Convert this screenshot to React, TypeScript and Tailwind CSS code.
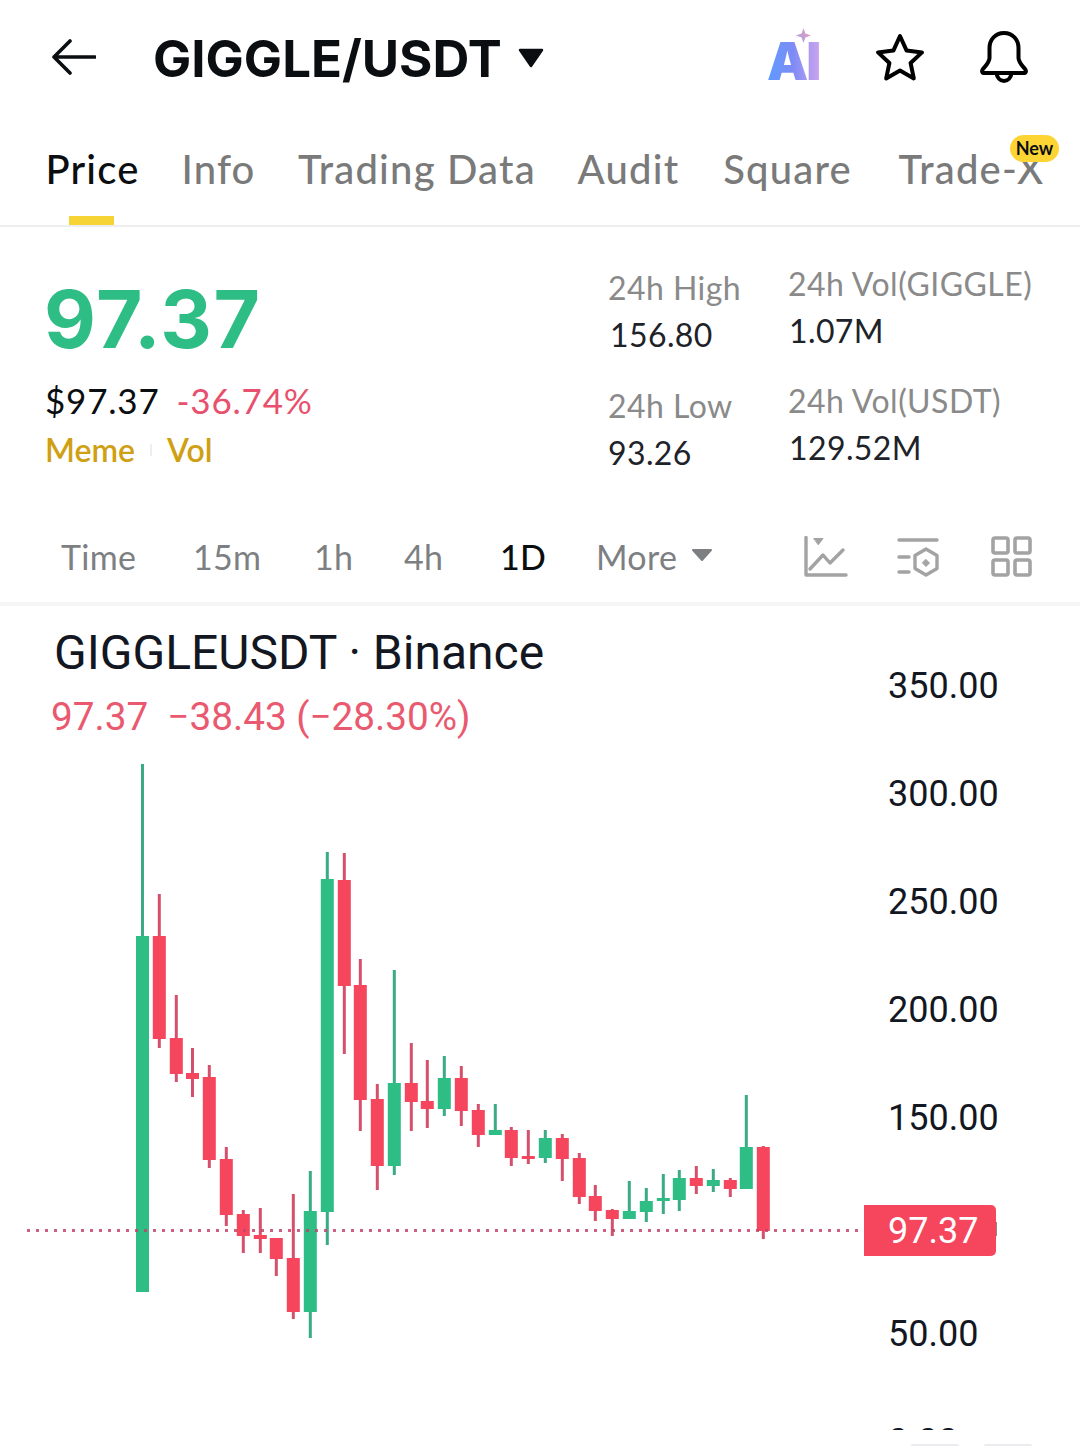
import React from "react";

const G = "#2ebd85";
const R = "#f6465d";
const GW = "#3aab86";
const RW = "#d4506c";

// cx, wickTop, bodyTop, bodyBottom, wickBottom, up
const candles: [number, number, number, number, number, number][] = [
  [142.5, 764, 936, 1292, 1292, 1],
  [159.3, 894, 936, 1039, 1048, 0],
  [176.3, 995, 1038, 1074, 1082, 0],
  [192.5, 1048, 1073, 1079, 1097, 0],
  [209.3, 1065, 1077, 1160, 1168, 0],
  [226.3, 1147, 1159, 1215, 1226, 0],
  [243.3, 1210, 1214, 1236, 1253, 0],
  [260.3, 1208, 1235, 1239, 1253, 0],
  [276.3, 1238, 1238, 1259, 1276, 0],
  [293.3, 1194, 1258, 1312, 1319, 0],
  [310.3, 1171, 1211, 1312, 1338, 1],
  [327.3, 852, 879, 1212, 1245, 1],
  [344.3, 853, 880, 986, 1054, 0],
  [360.3, 959, 985, 1100, 1131, 0],
  [377.3, 1084, 1099, 1166, 1190, 0],
  [394.3, 970, 1083, 1166, 1175, 1],
  [411.3, 1043, 1083, 1102, 1131, 0],
  [427.3, 1060, 1101, 1109, 1128, 0],
  [444.3, 1056, 1078, 1109, 1116, 1],
  [461.3, 1066, 1078, 1111, 1126, 0],
  [478.3, 1104, 1110, 1135, 1147, 0],
  [495.3, 1104, 1130, 1135, 1135, 1],
  [511.3, 1127, 1130, 1158, 1166, 0],
  [528.3, 1130, 1156, 1159, 1164, 0],
  [545.3, 1130, 1138, 1158, 1163, 1],
  [562.3, 1134, 1138, 1159, 1181, 0],
  [579.3, 1153, 1158, 1197, 1204, 0],
  [595.3, 1185, 1196, 1211, 1221, 0],
  [612.3, 1209, 1210, 1219, 1236, 0],
  [629.3, 1181, 1211, 1219, 1219, 1],
  [646.3, 1188, 1201, 1212, 1222, 1],
  [663.3, 1174, 1198, 1201, 1214, 1],
  [679.3, 1170, 1178, 1200, 1211, 1],
  [696.3, 1166, 1178, 1186, 1194, 0],
  [713.3, 1169, 1180, 1186, 1192, 1],
  [730.3, 1178, 1180, 1189, 1197, 0],
  [746.3, 1095, 1147, 1189, 1189, 1],
  [763.3, 1146, 1147, 1231, 1239, 0],
];

function Chart() {
  return (
    <svg width="864" height="824" viewBox="0 606 864 824" className="block shrink-0">
      {candles.map(([x, wt, bt, bb, wb, up]) => (
        <g key={x}>
          <rect x={x - 1.5} y={wt} width="3" height={wb - wt} fill={up ? GW : RW} />
          <rect x={x - 6.5} y={bt} width="13" height={bb - bt} fill={up ? G : R} />
        </g>
      ))}
      <line x1="27" x2="860" y1="1230.5" y2="1230.5" stroke="#c2456a" strokeWidth="3" strokeDasharray="3 6" opacity="0.85" />
    </svg>
  );
}

function AiLogo() {
  return (
    <div className="relative w-[55px] h-[52px] mt-[4px]">
      <svg width="17" height="17" viewBox="0 0 18 18" className="absolute left-[28px] top-[-6px]">
        <defs>
          <linearGradient id="sp" x1="0" y1="1" x2="1" y2="0">
            <stop offset="0" stopColor="#9f9cf5" />
            <stop offset="1" stopColor="#f0a0a8" />
          </linearGradient>
        </defs>
        <path d="M9 1 L11 7 L17 9 L11 11 L9 17 L7 11 L1 9 L7 7 Z" fill="url(#sp)" />
      </svg>
      <span
        className="absolute left-0 top-[1px] text-[52px] leading-[56px] font-black tracking-[-2px] bg-gradient-to-r from-[#5b9bff] via-[#7d8bf5] to-[#c9a3f0] bg-clip-text text-transparent"
        style={{ fontFamily: "Inter, sans-serif" }}
      >
        AI
      </span>
    </div>
  );
}

function Tab({ label, active, width }: { label: string; active?: boolean; width: string }) {
  return (
    <div className={`flex flex-col items-center shrink-0 ${width}`}>
      <span className={`text-[40px] leading-[46px] tracking-[1.2px] whitespace-nowrap font-medium ${active ? "text-[#0b0e11]" : "text-[#7a7a7a]"}`}>{label}</span>
      <div className={`w-[45px] h-[9px] mt-[24px] mr-[2px] ${active ? "bg-[#f6d436]" : "bg-transparent"}`} />
    </div>
  );
}

function Stat({ label, value, vClass, lClass }: { label: string; value: string; vClass?: string; lClass?: string }) {
  return (
    <div className="flex flex-col">
      <span className={`text-[32px] leading-[40px] tracking-[0.45px] text-[#8a8a8a] whitespace-nowrap ${lClass ?? ""}`}>{label}</span>
      <span className={`text-[32px] leading-[40px] tracking-[0.4px] mt-[7px] text-[#1e2329] whitespace-nowrap ${vClass ?? ""}`}>{value}</span>
    </div>
  );
}

export default function App() {
  const labels = ["350.00", "300.00", "250.00", "200.00", "150.00", "", "50.00", "0.00"];
  return (
    <div className="w-[1080px] h-[1446px] bg-white overflow-hidden flex flex-col" style={{ fontFamily: "Lato, sans-serif" }}>
      {/* Header */}
      <div className="h-[114px] shrink-0 flex items-center pl-[52px] pr-[50px]">
        <svg width="44" height="36" viewBox="0 0 44 36" fill="none" stroke="#0b0e11" strokeWidth="3.6" strokeLinecap="round" strokeLinejoin="round">
          <path d="M43 18H2M18 2 2 18l16 16" />
        </svg>
        <span className="ml-[57px] mt-[3px] text-[51px] leading-[60px] font-bold tracking-[0px] text-[#0b0e11]" style={{ fontFamily: "Inter, sans-serif" }}>
          GIGGLE/USDT
        </span>
        <svg width="28" height="20" viewBox="0 0 28 20" className="ml-[15px] mt-[2px]">
          <path d="M3 2h22l-11 16z" fill="#0b0e11" stroke="#0b0e11" strokeWidth="2.5" strokeLinejoin="round" />
        </svg>
        <div className="ml-auto flex items-center gap-[52px]">
          <AiLogo />
          <svg width="52" height="50" viewBox="0 0 52 50" fill="none" stroke="#000" strokeWidth="4" strokeLinejoin="round">
            <path d="M26 4l6.6 14.6L48 20.4 36.6 31l3.2 15.4L26 38.6 12.2 46.4 15.4 31 4 20.4l15.4-1.8z" />
          </svg>
          <svg width="52" height="54" viewBox="0 0 52 54" fill="none" stroke="#000" strokeWidth="4" strokeLinejoin="round">
            <path d="M26 3c-9 0-14.500 7-14.500 15v10c0 4-3 7-6.500 11-1.600 2-1 4 1.500 4h39c2.500 0 3.100-2 1.500-4-3.500-4-6.500-7-6.500-11V18c0-8-5.500-15-14.500-15z" />
            <path d="M18.500 43c.5 4.500 3.500 8 7.500 8s7-3.500 7.500-8" />
          </svg>
        </div>
      </div>

      {/* Tabs */}
      <div className="relative h-[113px] shrink-0 border-b-2 border-[#eeeeee] flex items-end pl-[47px]">
        <div className="flex gap-[45px]">
          <Tab label="Price" active width="w-[91px]" />
          <Tab label="Info" width="w-[71px]" />
          <Tab label="Trading Data" width="w-[236px]" />
          <Tab label="Audit" width="w-[97px]" />
          <Tab label="Square" width="w-[131px]" />
          <Tab label="Trade-X" width="w-[147px]" />
        </div>
        <span className="absolute left-[1010px] top-[21px] w-[49px] h-[27px] rounded-full bg-[#fcd535] text-[18px] leading-[27px] text-center font-bold text-[#0b0e11]">New</span>
      </div>

      {/* Stats */}
      <div className="h-[293px] shrink-0 flex pl-[46px]">
        <div className="w-[562px] flex flex-col">
          <span className="text-[80px] leading-[90px] font-bold tracking-[1.5px] -ml-[2px] text-[#2ebd85] mt-[47px]" style={{ fontFamily: "Inter, sans-serif" }}>97.37</span>
          <div className="flex items-baseline -ml-[1px] mt-[15px] text-[35px] leading-[42px] tracking-[0.8px]">
            <span className="text-[#0b0e11]">$97.37</span>
            <span className="text-[#e8506d] ml-[17px]">-36.74%</span>
          </div>
          <div className="flex items-center -ml-[1px] mt-[9px] text-[32px] leading-[40px] font-semibold text-[#cf9f14]">
            <span>Meme</span>
            <span className="w-[2px] h-[12px] bg-[#eeeeee] mx-[15px]" />
            <span>Vol</span>
          </div>
        </div>
        <div className="w-[180px] flex flex-col pt-[41px]">
          <Stat label="24h High" value="156.80" vClass="ml-[2px]" />
          <div className="mt-[31px]"><Stat label="24h Low" value="93.26" /></div>
        </div>
        <div className="flex flex-col pt-[37px]">
          <Stat label="24h Vol(GIGGLE)" value="1.07M" vClass="ml-[1px]" />
          <div className="mt-[30px]"><Stat label="24h Vol(USDT)" value="129.52M" vClass="ml-[1px]" /></div>
        </div>
      </div>

      {/* Time frames */}
      <div className="h-[86px] shrink-0 flex items-start pt-[16px] pl-[61px] pr-[47px] border-b-4 border-[#f5f5f5] text-[34px] leading-[42px] tracking-[0.3px] text-[#7d7f82]">
        <span className="w-[132px]">Time</span>
        <span className="w-[121px]">15m</span>
        <span className="w-[90px]">1h</span>
        <span className="w-[96px]">4h</span>
        <span className="w-[96px] text-[#0b0e11] font-medium">1D</span>
        <span>More</span>
        <svg width="22" height="14" viewBox="0 0 22 14" className="ml-[14px] mt-[12px]">
          <path d="M2 2h18l-9 10z" fill="#7d7f82" stroke="#7d7f82" strokeWidth="2" strokeLinejoin="round" />
        </svg>
        <div className="ml-auto flex items-start">
          <svg width="44" height="42" viewBox="0 0 44 42" fill="none" stroke="#a3a3a3" strokeWidth="3.4" strokeLinecap="round" strokeLinejoin="round">
            <path d="M2 1.500v37.500h40" />
            <path d="M6 33 19 19l7 8 13-13" />
            <path d="M10 2.500h9l-4.500 6z" fill="#a3a3a3" strokeWidth="1" />
          </svg>
          <svg width="44" height="44" viewBox="0 0 44 44" fill="none" stroke="#a3a3a3" strokeWidth="3.4" strokeLinecap="round" strokeLinejoin="round" className="ml-[49px]">
            <path d="M2 4h38M2 21h10M2 36h10" />
            <path d="M29 13l11 6.500v13l-11 6.500-11-6.500v-13z" />
            <path d="M29 23.500l3.500 3.500-3.500 3.500-3.500-3.500z" fill="#a3a3a3" strokeWidth="1" />
          </svg>
          <svg width="42" height="42" viewBox="0 0 42 42" fill="none" stroke="#a3a3a3" strokeWidth="3.6" strokeLinejoin="round" className="ml-[50px]">
            <rect x="2" y="2" width="15" height="15" rx="2" />
            <rect x="24" y="2" width="15" height="15" rx="2" />
            <rect x="2" y="24" width="15" height="15" rx="2" />
            <rect x="24" y="24" width="15" height="15" rx="2" />
          </svg>
        </div>
      </div>

      {/* Chart */}
      <div className="relative h-[824px] shrink-0 overflow-hidden flex" style={{ fontFamily: "Roboto, sans-serif" }}>
        <div className="absolute left-[54px] top-[20px] text-[48px] leading-[54px] text-[#131722] whitespace-nowrap">GIGGLEUSDT · Binance</div>
        <div className="absolute left-[51px] top-[88px] text-[38.700px] leading-[46px] text-[#e9596f] whitespace-pre">97.37  −38.43 (−28.30%)</div>
        <Chart />
        <div className="w-[216px] shrink-0 pl-[24px] pt-[55px] flex flex-col text-[36px] leading-[50px] text-[#131722]">
          {labels.map((l, i) => (
            <span key={i} className="h-[108px] shrink-0 whitespace-nowrap">{l}</span>
          ))}
        </div>
        <div className="absolute left-[864px] top-[599px] w-[132px] h-[51px] bg-[#f6465d] rounded-r-[5px] pl-[24px] text-[36px] leading-[53px] text-white">97.37</div>
        <div className="absolute left-[996px] top-[616px] w-[1px] h-[14px] bg-[#8a8a8a]" />
      </div>

      {/* Bottom */}
      <div className="flex pl-[910px] gap-[23px] pt-[14px]">
        <div className="w-[50px] h-[4px] rounded-t-full bg-[#ebebf0]" />
        <div className="w-[50px] h-[4px] rounded-t-full bg-[#ebebf0]" />
      </div>
    </div>
  );
}
